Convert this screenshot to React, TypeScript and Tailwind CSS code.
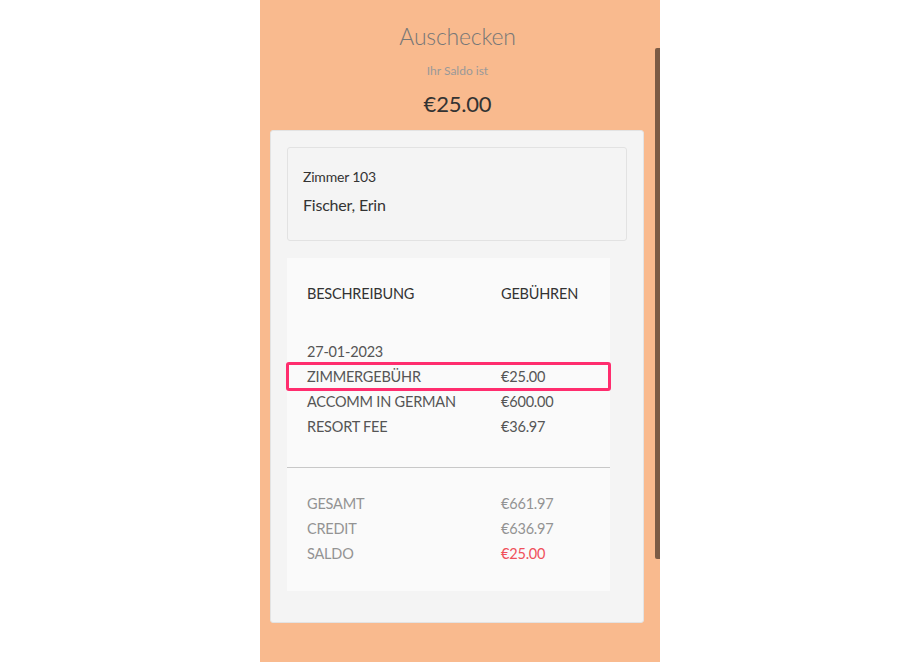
export default function App() {
  const items = [
    { label: "ZIMMERGEBÜHR", amount: "€25.00", highlight: true },
    { label: "ACCOMM IN GERMAN", amount: "€600.00" },
    { label: "RESORT FEE", amount: "€36.97" },
  ];
  const totals = [
    { label: "GESAMT", amount: "€661.97" },
    { label: "CREDIT", amount: "€636.97" },
    { label: "SALDO", amount: "€25.00", red: true },
  ];

  return (
    <div className="min-h-screen bg-white flex justify-center font-['Lato',sans-serif]">
      <div className="w-[400px] h-[662px] bg-[#f9ba8e] flex overflow-hidden">
        <div className="w-[395px] pt-[20px]">
          <h1 className="text-center text-[23px] leading-[32px] font-light tracking-[-0.2px] text-[#777]">
            Auschecken
          </h1>
          <p className="mt-[11px] text-center text-[12px] leading-[16px] text-[#999]">
            Ihr Saldo ist
          </p>
          <p className="mt-[11px] text-center text-[22px] leading-[28px] tracking-[-0.2px] text-[#333]">
            €25.00
          </p>

          <div className="mt-[12px] ml-[10px] w-[374px] rounded-[3px] border border-[#e3e3e3] bg-[#f4f4f4] px-[16px] pt-[16px] pb-[31px]">
            <div className="h-[94px] rounded-[3px] border border-[#e2e2e2] pl-[15px] pt-[19px] tracking-[-0.2px]">
              <div className="text-[14px] leading-[20px] text-[#333]">Zimmer 103</div>
              <div className="mt-[6px] text-[16px] leading-[24px] text-[#333]">Fischer, Erin</div>
            </div>

            <div className="mt-[17px] w-[323px] bg-[#fafafa] pt-[25px] pb-[25px] text-[14.5px] tracking-[-0.2px]">
              <div className="flex pl-[20px] leading-[22px] text-[#333]">
                <span className="w-[194px]">BESCHREIBUNG</span>
                <span>GEBÜHREN</span>
              </div>

              <div className="mt-[34px] pl-[20px] leading-[25px] text-[#555]">27-01-2023</div>
              {items.map((item) => (
                <div key={item.label} className="relative flex pl-[20px] leading-[25px] text-[#555]">
                  <span className="w-[194px]">{item.label}</span>
                  <span>{item.amount}</span>
                  {item.highlight ? (
                    <span className="absolute -left-[1px] -right-[1px] -top-[2px] -bottom-[2px] rounded-[3px] border-[3px] border-[#ff2d6e]" />
                  ) : null}
                </div>
              ))}

              <div className="mt-[28px] h-px bg-[#c8c8c8]" />

              <div className="mt-[23px]">
                {totals.map((row) => (
                  <div key={row.label} className="flex pl-[20px] leading-[25px] text-[#939393]">
                    <span className="w-[194px]">{row.label}</span>
                    <span className={row.red ? "text-[#f0505a]" : ""}>{row.amount}</span>
                  </div>
                ))}
              </div>
            </div>
          </div>
        </div>
        <div className="w-[5px] pt-[48px]">
          <div className="h-[511px] rounded-l-[2px] bg-[#7b5b45]" />
        </div>
      </div>
    </div>
  );
}
